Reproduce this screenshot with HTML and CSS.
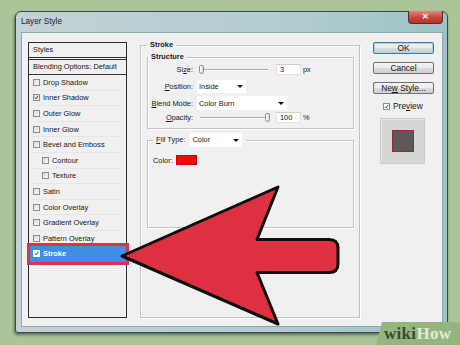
FILE: index.html
```html
<!DOCTYPE html>
<html>
<head>
  <meta charset="UTF-8">
  <title>Layer Style</title>
  <link rel="stylesheet" href="styles.css">
</head>
<body>
  <div class="window">
    <div class="titlebar">
      <span class="title">Layer Style</span>
      <span class="close">&#x2715;</span>
    </div>

    <div class="client">
      <!-- left: list of effects -->
      <div class="styles-list">
        <div class="list-head">Styles</div>
        <div class="list-blend">Blending Options: Default</div>
        <div class="item"><span class="check"></span>Drop Shadow</div>
        <div class="item"><span class="check on"><svg viewBox="0 0 7 7"><path d="M1.5 3.5 L3 5.5 L5.8 1" /></svg></span>Inner Shadow</div>
        <div class="item"><span class="check"></span>Outer Glow</div>
        <div class="item"><span class="check"></span>Inner Glow</div>
        <div class="item"><span class="check"></span>Bevel and Emboss</div>
        <div class="item sub"><span class="check"></span>Contour</div>
        <div class="item sub"><span class="check"></span>Texture</div>
        <div class="item"><span class="check"></span>Satin</div>
        <div class="item"><span class="check"></span>Color Overlay</div>
        <div class="item"><span class="check"></span>Gradient Overlay</div>
        <div class="item"><span class="check"></span>Pattern Overlay</div>
        <div class="item selected"><span class="check on white"><svg viewBox="0 0 7 7"><path d="M1.5 3.5 L3 5.5 L5.8 1" /></svg></span>Stroke</div>
      </div>

      <!-- middle: stroke settings -->
      <fieldset class="group stroke">
        <legend class="bold">Stroke</legend>
        <fieldset class="group structure">
          <legend class="bold">Structure</legend>
          <div class="row r-size">
            <span class="label">Si<u>z</u>e:</span>
            <span class="slider"><span class="thumb"></span></span>
            <span class="field">3</span>
            <span class="unit">px</span>
          </div>
          <div class="row r-pos">
            <span class="label"><u>P</u>osition:</span>
            <span class="select narrow">Inside<i class="caret"></i></span>
          </div>
          <div class="row r-blend">
            <span class="label"><u>B</u>lend Mode:</span>
            <span class="select wide">Color Burn<i class="caret"></i></span>
          </div>
          <div class="row r-opacity">
            <span class="label"><u>O</u>pacity:</span>
            <span class="slider"><span class="thumb end"></span></span>
            <span class="field">100</span>
            <span class="unit">%</span>
          </div>
        </fieldset>

        <fieldset class="group fill">
          <legend class="fill-legend"><span><u>F</u>ill Type:</span><span class="select fill-select">Color<i class="caret"></i></span></legend>
          <div class="color-row">
            <span>Color:</span>
            <span class="swatch"></span>
          </div>
        </fieldset>
      </fieldset>

      <!-- right: buttons and preview -->
      <div class="buttons">
        <div class="btn default">OK</div>
        <div class="btn">Cancel</div>
        <div class="btn">Ne<u>w</u> Style...</div>
        <div class="preview-check"><span class="check on"><svg viewBox="0 0 7 7"><path d="M1.5 3.5 L3 5.5 L5.8 1" /></svg></span>Pre<u>v</u>iew</div>
        <div class="preview"><div class="preview-square"></div></div>
      </div>
    </div>
  </div>

  <!-- annotation arrow drawn over the dialog -->
  <svg class="arrow" width="460" height="345" viewBox="0 0 460 345">
    <path d="M122,256 L278,187 L257,239.5 L329,239.5 Q338,239.5 338,248 L338,264 Q338,272.5 329,272.5 L257,272.5 L278,324 Z" />
  </svg>

  <div class="wikihow"><span class="wiki">wiki</span><span class="how">How</span></div>
</body>
</html>
```

FILE: styles.css
```css
* {
  box-sizing: border-box;
}

html,
body{
  margin: 0;
  width: 460px;
  height: 345px;
  overflow: hidden;
  background: #abc59a;
  font-family: "Liberation Sans", Arial, sans-serif;
  color: #161616;
}

body{
  position: relative;
}

u{
  text-decoration: underline;
  text-underline-offset: 1px;
}

.window{
  margin: 11px 0 0 15px;
  width: 433px;
  height: 322px;
  border: 1px solid #3d4649;
  border-radius: 6px 6px 3px 3px;
  background: linear-gradient(to right, #c3d2d6, #b3cdd2 60%, #9dc3c2);
  padding: 0 4px 5px 5px;
  box-shadow: -1px 2px 3px rgba(0, 0, 0, 0.45);
}

.titlebar{
  height: 20px;
  display: flex;
  align-items: center;
  justify-content: space-between;
}

.title{
  font-size: 8.2px;
  color: #1c1c1c;
  margin-top: -1px;
}

.close{
  align-self: flex-start;
  margin-top: -1px;
  width: 35px;
  height: 13px;
  border: 1px solid #5a2a26;
  border-top: none;
  border-radius: 0 0 4px 4px;
  background: linear-gradient(#e0857a, #c6473c 55%, #b8352c);
  color: #fff;
  font-size: 8px;
  font-weight: bold;
  text-align: center;
  line-height: 12px;
}

.client{
  height: 295px;
  background: #f0f0f0;
  border: 1px solid #8fa5ab;
  padding: 9px 8px 8px 6px;
  display: flex;
  align-items: stretch;
  font-size: 7.4px;
}

/* list of styles */

.styles-list{
  width: 99px;
  flex: none;
  border: 1px solid #2b2b2b;
  background: #f0f0f0;
}

.list-head,
.list-blend{
  line-height: 14px;
  padding-left: 4px;
}

.list-head{
  height: 17px;
  border-bottom: 3px double #333;
}

.list-blend{
  border-bottom: 1px solid #333;
  height: 15px;
}

.item{
  height: 15.6px;
  display: flex;
  align-items: center;
  padding-left: 4px;
  border-bottom: 1px solid #e6e6e6;
  margin-right: 3px;
}

.item.sub{
  padding-left: 13px;
}

.check{
  width: 7px;
  height: 7px;
  border: 1px solid #8d8d8d;
  background: linear-gradient(135deg, #d8d8d8, #fbfbfb);
  margin-right: 3px;
  flex: none;
  display: inline-flex;
}

.check svg{
  width: 100%;
  height: 100%;
  fill: none;
  stroke: #222;
  stroke-width: 1.1;
}

.item.selected{
  margin: 0 0 0 1px;
  padding-left: 3px;
  height: 16px;
  border: none;
  color: #fff;
  font-weight: bold;
  background: #3d8ee4;
  outline: 3px solid #d7364a;
  position: relative;
  top: -1px;
}

.check.white{
  background: #fff;
  border-color: #fff;
}

/* stroke settings */

.group{
  margin: 0;
  border: 1px solid #c3c3c3;
  box-shadow: inset 1px 1px 0 #fff, 1px 1px 0 #fff;
  min-width: 0;
}

.bold{
  font-weight: bold;
}

legend{
  line-height: 10px;
  padding: 0 3px;
}

.stroke{
  width: 220px;
  flex: none;
  margin: -2px 13px 0 13px;
  padding: 2px 5px 0 6px;
}

.structure{
  padding: 1px 0 4px 0;
}

.row{
  display: flex;
  align-items: center;
  height: 14px;
  margin-bottom: 2px;
}

.r-size{
  height: 13px;
  margin-bottom: 3px;
}

.r-pos{
  margin-bottom: 3px;
}

.r-blend{
  margin-bottom: 1px;
}

.r-opacity{
  height: 13px;
  margin-bottom: 0;
}

.label{
  width: 45px;
  text-align: right;
  margin-right: 4px;
  flex: none;
}

.slider{
  margin-left: 3px;
  width: 68px;
  height: 2px;
  border-top: 1px solid #a8a8a8;
  border-bottom: 1px solid #fff;
  position: relative;
  flex: none;
}

.thumb{
  position: absolute;
  left: -1px;
  top: -5px;
  width: 5px;
  height: 9px;
  border: 1px solid #8c8c8c;
  border-radius: 2px 2px 3px 3px;
  background: linear-gradient(to right, #fff, #d8d8d8);
}

.thumb.end{
  left: auto;
  right: -2px;
}

.field{
  margin-left: 8px;
  width: 25px;
  height: 11px;
  line-height: 10px;
  background: #fff;
  border: 1px solid #e2e2e2;
  border-top-color: #cfcfcf;
  padding-left: 3px;
  flex: none;
}

.unit{
  margin-left: 2px;
}

.select{
  display: flex;
  align-items: center;
  justify-content: space-between;
  background: #fff;
  height: 14px;
  padding: 0 3px 0 2px;
  flex: none;
}

.select.narrow{
  width: 49px;
  height: 13px;
}

.select.wide{
  width: 90px;
}

.caret{
  width: 0;
  height: 0;
  border-top: 3.5px solid #111;
  border-left: 3px solid transparent;
  border-right: 3px solid transparent;
}

.fill{
  margin-top: 4px;
  padding: 0 6px 62px 5px;
}

.fill-legend{
  display: flex;
  align-items: center;
  line-height: 14px;
  padding: 0 4px 0 3px;
}

.fill-select{
  width: 53px;
  margin-left: 4px;
  padding-left: 3px;
}

.color-row{
  display: flex;
  align-items: center;
  margin-top: 8px;
  height: 10px;
}

.swatch{
  width: 21px;
  height: 10px;
  margin-left: 3px;
  background: #ee0a0a;
  border: 1px solid #c00;
}

/* buttons and preview */

.buttons{
  width: 61px;
  flex: none;
  display: flex;
  flex-direction: column;
  font-size: 8.4px;
}

.btn{
  height: 12px;
  margin-bottom: 8px;
  border: 1px solid #717171;
  border-radius: 2px;
  background: linear-gradient(#f4f4f4, #ebebeb 50%, #dcdcdc 51%, #cfcfcf);
  text-align: center;
  line-height: 10px;
  color: #111;
}

.btn.default{
  border-color: #3a7bb0;
  box-shadow: inset 0 0 0 1px #9fd4f0;
}

.preview-check{
  display: flex;
  align-items: center;
  margin: -2px 0 0 10px;
  height: 12px;
}

.preview-check .check{
  margin-right: 3px;
  background: #fff;
}

.preview{
  margin: 6px 0 0 7px;
  width: 45px;
  height: 46px;
  background: #d6d6d6;
  border: 1px solid #cbcbcb;
  box-shadow: inset 1px 1px 0 #e6e6e6;
  display: flex;
  align-items: center;
  justify-content: center;
}

.preview-square{
  width: 22px;
  height: 22px;
  margin-left: 1px;
  background: #5a5a5a;
  border: 1px solid #a32535;
}

/* overlays */

.arrow{
  position: absolute;
  left: 0;
  top: 0;
}

.arrow path{
  fill: #dd3141;
  stroke: #0d0d0d;
  stroke-width: 3;
  stroke-linejoin: round;
}

.wikihow{
  position: absolute;
  right: 0;
  bottom: 0;
  width: 84px;
  height: 23px;
  background: #95b57f;
  clip-path: polygon(6px 0, 100% 0, 100% 100%, 0 100%);
  font-family: "Liberation Serif", "Times New Roman", serif;
  font-weight: bold;
  font-size: 17px;
  line-height: 23px;
  padding-left: 8px;
  letter-spacing: 0.3px;
}

.wiki{
  color: #3b4a33;
}

.how{
  color: #e2ebd9;
}
```
